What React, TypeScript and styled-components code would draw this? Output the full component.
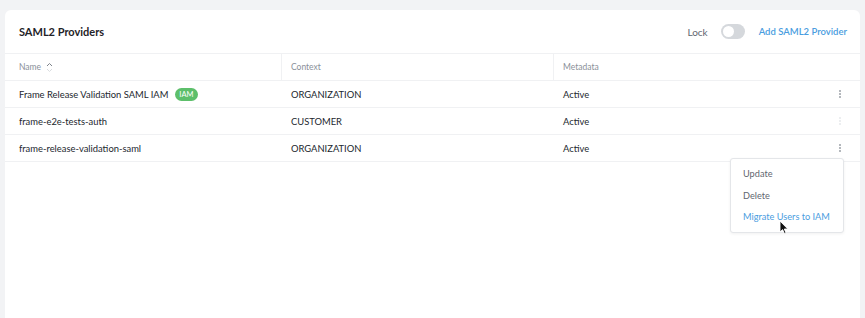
import React from "react";
import styled, {createGlobalStyle} from "styled-components";

const GlobalStyle = createGlobalStyle`
    html, body {
        margin: 0;
        padding: 0;
        background: #f2f3f5;
        font-family: Lato, "Open Sans", "Liberation Sans", sans-serif;
        color: #22272e;
    }
`

const Page = styled.div`
    height: 318px;
    padding: 10px 5px 0 5px;
    box-sizing: border-box;
    overflow: hidden;
`

const Card = styled.div`
    position: relative;
    height: 100%;
    background: #ffffff;
    border-radius: 6px 6px 0 0;
`

const Header = styled.div`
    display: flex;
    align-items: center;
    height: 43px;
    padding: 0 13px 0 14px;
    border-bottom: 1px solid #f0f1f3;
`

const Title = styled.h1`
    flex: 1;
    margin: 0;
    font-size: 11px;
    font-weight: 700;
    color: #1f2328;
`

const LockLabel = styled.span`
    font-size: 10px;
    color: #5f6670;
    margin-right: 13px;
`

const Toggle = styled.div<{on?: boolean}>`
    position: relative;
    width: 24px;
    height: 15px;
    border-radius: 8px;
    background: ${p => p.on ? "#4a9de0" : "#d5d8dc"};
    margin-right: 14px;
    &::after {
        content: "";
        position: absolute;
        top: 2px;
        left: ${p => p.on ? "11px" : "2px"};
        width: 11px;
        height: 11px;
        border-radius: 50%;
        background: #fff;
    }
`

const LinkButton = styled.a`
    font-size: 9.5px;
    font-weight: 600;
    color: #4a9de0;
    cursor: pointer;
`

const Grid = styled.div`
    display: grid;
    grid-template-columns: 276px 272px 1fr 40px;
`

const HeadCell = styled.div<{divider?: boolean}>`
    display: flex;
    align-items: center;
    height: 26px;
    font-size: 8.5px;
    color: #8a9099;
    border-bottom: 1px solid #f0f1f3;
    border-left: ${p => p.divider ? "1px solid #f0f1f3" : "none"};
    padding-left: ${p => p.divider ? "9px" : "14px"};
`

const Cell = styled.div<{pad?: number}>`
    display: flex;
    align-items: center;
    height: 26px;
    padding-left: ${p => p.pad ?? 10}px;
    font-size: 9.4px;
    color: #22272e;
    border-bottom: 1px solid #f0f1f3;
`

const Badge = styled.span`
    margin-left: 7px;
    padding: 1px 4px;
    border-radius: 7px;
    background: #5dbf6b;
    color: #fff;
    font-size: 7.5px;
    line-height: 11px;
`

const Kebab = styled.div<{faint?: boolean}>`
    display: flex;
    flex-direction: column;
    gap: 1px;
    & span {
        width: 2px;
        height: 2px;
        background: ${p => p.faint ? "#eceef0" : "#b4b8bd"};
    }
`

const Menu = styled.div`
    position: absolute;
    top: 148px;
    left: 725px;
    width: 112px;
    padding: 4px 0 4px;
    background: #fff;
    border: 1px solid #e4e6e9;
    border-radius: 3px;
    box-shadow: 0 1px 3px rgba(0, 0, 0, 0.06);
`

const MenuItem = styled.div<{accent?: boolean}>`
    height: 21.5px;
    display: flex;
    align-items: center;
    padding-left: 12px;
    font-size: 9.2px;
    color: ${p => p.accent ? "#4a9de0" : "#5f6670"};
`

const Cursor = styled.svg`
    position: absolute;
    left: 774px;
    top: 210px;
`

const SortIcon = () => (
    <svg width="7" height="11" viewBox="0 0 7 11" style={{marginLeft: 5}}>
        <path d="M1 4 L3.5 1.5 L6 4" fill="none" stroke="#7d838b" strokeWidth="1"/>
        <path d="M1 7 L3.5 9.5 L6 7" fill="none" stroke="#dadde0" strokeWidth="1"/>
    </svg>
)

const rows = [
    {name: "Frame Release Validation SAML IAM", iam: true, context: "ORGANIZATION", meta: "Active", faint: false},
    {name: "frame-e2e-tests-auth", iam: false, context: "CUSTOMER", meta: "Active", faint: true},
    {name: "frame-release-validation-saml", iam: false, context: "ORGANIZATION", meta: "Active", faint: false},
]

export default function App() {
    return <>
        <GlobalStyle/>
        <Page>
            <Card>
                <Header>
                    <Title>SAML2 Providers</Title>
                    <LockLabel>Lock</LockLabel>
                    <Toggle/>
                    <LinkButton>Add SAML2 Provider</LinkButton>
                </Header>
                <Grid>
                    <HeadCell>Name<SortIcon/></HeadCell>
                    <HeadCell divider>Context</HeadCell>
                    <HeadCell divider>Metadata</HeadCell>
                    <HeadCell/>
                    {rows.map(r => <React.Fragment key={r.name}>
                        <Cell pad={14}>{r.name}{r.iam && <Badge>IAM</Badge>}</Cell>
                        <Cell>{r.context}</Cell>
                        <Cell>{r.meta}</Cell>
                        <Cell pad={19}>
                            <Kebab faint={r.faint}><span/><span/><span/></Kebab>
                        </Cell>
                    </React.Fragment>)}
                </Grid>
                <Menu>
                    <MenuItem>Update</MenuItem>
                    <MenuItem>Delete</MenuItem>
                    <MenuItem accent>Migrate Users to IAM</MenuItem>
                </Menu>
                <Cursor width="10" height="15" viewBox="0 0 10 15">
                    <path d="M1 1 L1 12 L3.6 9.6 L5.4 13.6 L7 12.9 L5.3 9 L8.8 9 Z" fill="#111" stroke="#fff" strokeWidth="0.9"/>
                </Cursor>
            </Card>
        </Page>
    </>
}
